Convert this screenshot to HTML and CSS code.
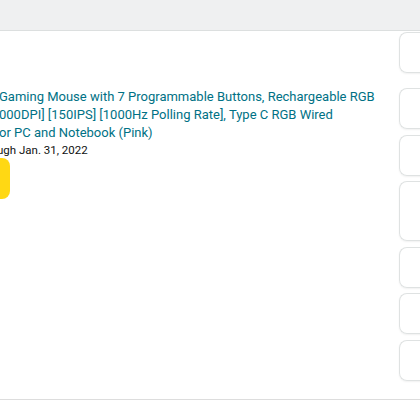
FILE: index.html
```html
<!DOCTYPE html>
<html>
<head>
<meta charset="utf-8">
<link rel="stylesheet" href="styles.css">
</head>
<body>
<div class="page">
  <div class="topbar"></div>
  <div class="content">
    <div class="main">
      <div class="offer">
        <a class="title">
          <span class="line">Gaming Mouse with 7 Programmable Buttons, Rechargeable RGB</span>
          <span class="line">000DPI] [150IPS] [1000Hz Polling Rate], Type C RGB Wired</span>
          <span class="line">or PC and Notebook (Pink)</span>
        </a>
        <div class="valid">ugh Jan. 31, 2022</div>
        <div class="btn"></div>
      </div>
    </div>
    <div class="side">
      <div class="card"></div>
      <div class="card gap-lg"></div>
      <div class="card"></div>
      <div class="card tall"></div>
      <div class="card"></div>
      <div class="card"></div>
      <div class="card"></div>
    </div>
  </div>
</div>
</body>
</html>
```

FILE: styles.css
```css
html, body {
  margin: 0;
  padding: 0;
  background: #ffffff;
}
.page {
  width: 420px;
  height: 420px;
  overflow: hidden;
  font-family: Roboto, "Liberation Sans", Arial, sans-serif;
}
.topbar {
  height: 30px;
  background: #eff0f1;
  border-bottom: 1px solid #dcdfdf;
}
.content {
  display: flex;
  height: 368px;
  border-bottom: 1px solid #dddddd;
}
.main {
  flex: 1;
  overflow: hidden;
  padding-top: 57px;
}
.offer {
  margin-left: -1px;
}
.title {
  display: block;
  color: #007185;
  font-size: 13px;
  line-height: 18px;
}
.line {
  display: block;
  white-space: nowrap;
}
.valid {
  margin-left: -2px;
  font-size: 11.5px;
  line-height: 16px;
  color: #0f1111;
  white-space: nowrap;
}
.btn {
  margin-left: -30px;
  width: 41px;
  height: 41px;
  background: #ffd814;
  border-radius: 8px;
}
.side {
  width: 21px;
  display: flex;
  flex-direction: column;
  gap: 5.5px;
  padding-top: 1px;
}
.card {
  box-sizing: border-box;
  width: 40px;
  height: 41px;
  border: 1px solid #dfe2e2;
  border-right: none;
  border-radius: 8px 0 0 8px;
  box-shadow: 0 1px 2px rgba(0,0,0,0.06);
  flex: none;
}
.card.gap-lg {
  margin-top: 9.5px;
}
.card.tall {
  height: 60px;
}
```
